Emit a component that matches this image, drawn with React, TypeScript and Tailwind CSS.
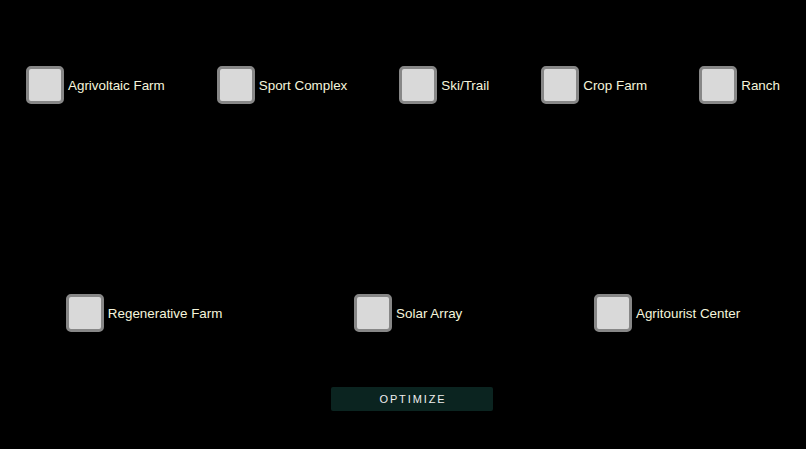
import { useState } from 'react';

const topRow = ['Agrivoltaic Farm', 'Sport Complex', 'Ski/Trail', 'Crop Farm', 'Ranch'];
const bottomRow = ['Regenerative Farm', 'Solar Array', 'Agritourist Center'];

function Option({ label, checked, onToggle }: { label: string; checked: boolean; onToggle: () => void }) {
  return (
    <label className="flex items-center gap-[4px] cursor-pointer select-none">
      <input
        type="checkbox"
        checked={checked}
        onChange={onToggle}
        className="appearance-none w-[38px] h-[38px] rounded-[5px] border-[3px] border-[#878787] bg-[#d9d9d9] checked:bg-[#9fd3c7] cursor-pointer"
      />
      <span className="mt-[3px] text-[13.4px] text-[#f5f5dc]">{label}</span>
    </label>
  );
}

export default function App() {
  const [selected, setSelected] = useState<Record<string, boolean>>({});
  const toggle = (name: string) => setSelected(s => ({ ...s, [name]: !s[name] }));

  return (
    <div className="w-full h-[449px] bg-black pt-[66px] overflow-hidden" style={{ fontFamily: '"Liberation Sans", Arial, sans-serif' }}>
      <div className="flex justify-around items-center">
        {topRow.map(name => (
          <Option key={name} label={name} checked={!!selected[name]} onToggle={() => toggle(name)} />
        ))}
      </div>
      <div className="flex justify-around items-center mt-[190px]">
        {bottomRow.map(name => (
          <Option key={name} label={name} checked={!!selected[name]} onToggle={() => toggle(name)} />
        ))}
      </div>
      <div className="flex justify-center pl-[18px] mt-[55px]">
        <button className="w-[162px] h-[24px] rounded-[2px] bg-[#0b2420] text-[#eeeeee] text-[11px] tracking-[1.9px] pl-[2px]">
          OPTIMIZE
        </button>
      </div>
    </div>
  );
}
